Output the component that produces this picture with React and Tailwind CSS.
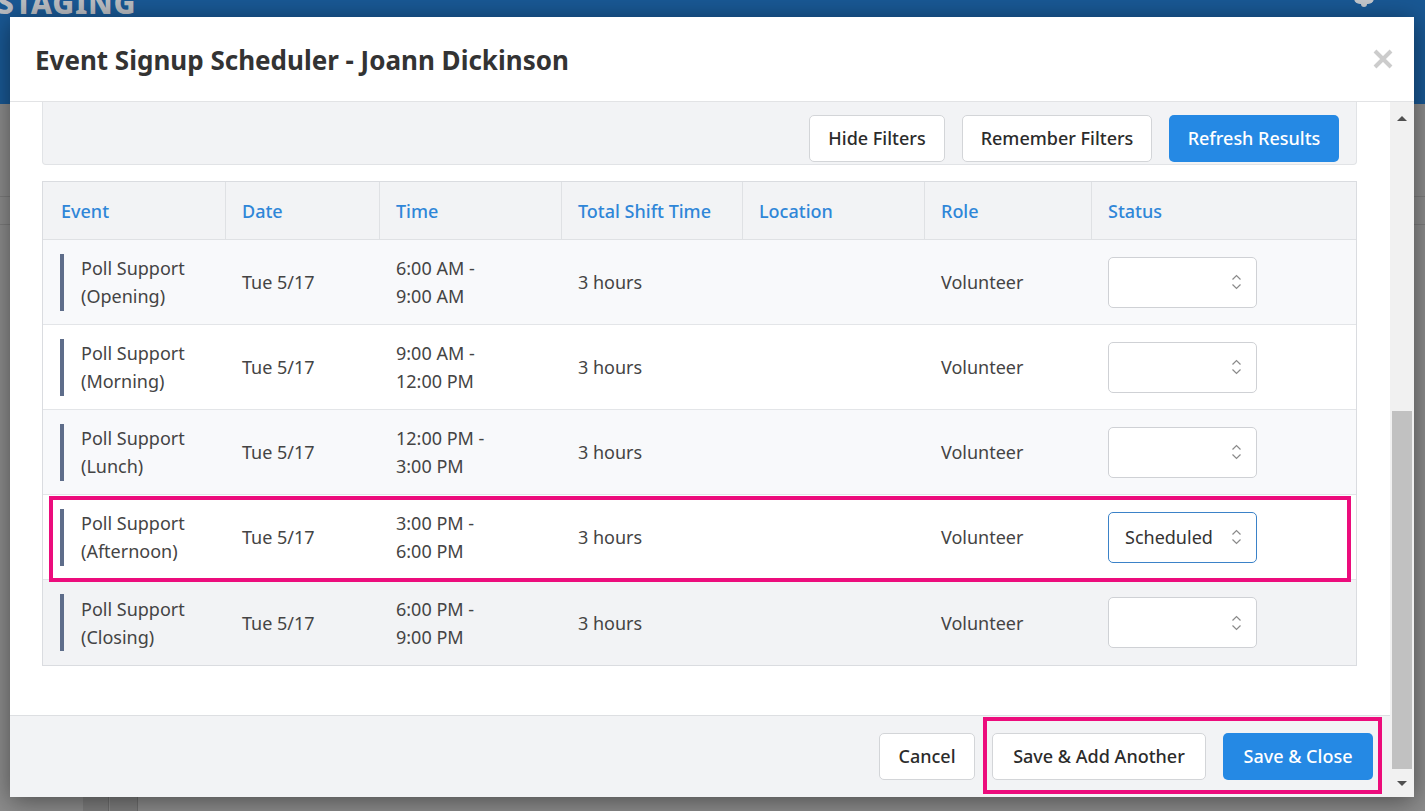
import React from "react";

const rows = [
  { a: "Poll Support", b: "(Opening)", t1: "6:00 AM -", t2: "9:00 AM", bg: "bg-[#f8f9fb]" },
  { a: "Poll Support", b: "(Morning)", t1: "9:00 AM -", t2: "12:00 PM", bg: "bg-white" },
  { a: "Poll Support", b: "(Lunch)", t1: "12:00 PM -", t2: "3:00 PM", bg: "bg-[#f8f9fb]" },
  { a: "Poll Support", b: "(Afternoon)", t1: "3:00 PM -", t2: "6:00 PM", bg: "bg-white", val: "Scheduled" },
  { a: "Poll Support", b: "(Closing)", t1: "6:00 PM -", t2: "9:00 PM", bg: "bg-[#f2f3f5]" },
];

const grid = "grid grid-cols-[183px_154px_182px_181px_182px_167px_1fr]";

function Chevrons() {
  return (
    <svg width="11" height="18" viewBox="0 0 11 18" fill="none" stroke="#8a8a8a" strokeWidth="1.2">
      <path d="M1.5 6.5 L5.5 2.5 L9.5 6.5" />
      <path d="M1.5 11.5 L5.5 15.5 L9.5 11.5" />
    </svg>
  );
}

function Select({ value }) {
  return (
    <div
      className={`w-[149px] h-[51px] rounded-[5px] bg-white border flex items-center justify-between pl-[16px] pr-[14px] ${
        value ? "border-[#3b82c8]" : "border-[#cfd1d5]"
      }`}
    >
      <span className="text-[18px] text-[#333]">{value || ""}</span>
      <Chevrons />
    </div>
  );
}

function Btn({ children, w, primary }) {
  return (
    <div
      className={`${w} h-[47px] rounded-[5px] flex items-center justify-center text-[18px] font-medium ${
        primary ? "bg-[#2589e4] text-white" : "bg-white border border-[#d3d5d8] text-[#2b2b2b]"
      }`}
    >
      {children}
    </div>
  );
}

export default function App() {
  return (
    <div
      className="relative w-[1425px] h-[811px] overflow-hidden bg-[#8c8c8c]"
      style={{ fontFamily: '"Noto Sans", "Open Sans", sans-serif' }}
    >
      {/* background page (dimmed) */}
      <div className="h-[104px] bg-[#195894] relative overflow-hidden">
        <div className="absolute left-[-3px] top-[-20px] text-[30px] font-extrabold tracking-wide text-[#b9bcc1]">
          STAGING
        </div>
        <div className="absolute left-[1354px] top-[-6px] w-[22px] h-[14px]">
          <div className="w-[20px] h-[10px] bg-[#c4c7cc] rounded-b-[6px]" />
          <div className="w-[6px] h-[3px] bg-[#c4c7cc] rounded-b-full ml-[7px]" />
        </div>
      </div>
      <div className="flex flex-col">
        <div className="h-[93px] border-b border-[#7c7c7c]" />
        <div className="h-[28px] border-b border-[#7c7c7c]" />
      </div>
      <div className="absolute left-[83px] top-[797px] w-[26px] h-[14px] bg-[#7e7e7e] border-r border-[#6e6e6e]" />
      <div className="absolute left-[110px] top-[797px] w-[28px] h-[14px] bg-[#7e7e7e] border-r border-[#6e6e6e]" />

      {/* modal */}
      <div className="absolute left-[10px] top-[17px] w-[1404px] h-[780px] bg-white flex flex-col shadow-[0_4px_24px_rgba(0,0,0,0.45)]">
        {/* header */}
        <div className="h-[85px] shrink-0 flex items-center justify-between pl-[25px] pr-[21px] border-b border-[#e2e3e5]">
          <div className="text-[26px] font-bold text-[#333] mt-[3px]">
            Event Signup Scheduler - Joann Dickinson
          </div>
          <svg width="20" height="20" viewBox="0 0 20 20" stroke="#cccccc" strokeWidth="4" strokeLinecap="butt">
            <path d="M2 2 L18 18 M18 2 L2 18" />
          </svg>
        </div>

        <div className="flex flex-1 min-h-0">
          {/* main column */}
          <div className="flex-1 flex flex-col min-w-0">
            <div className="flex-1 pl-[32px] pr-[33px]">
              {/* filters panel */}
              <div className="h-[63px] bg-[#f2f3f5] border border-t-0 border-[#e1e3e6] rounded-b-[4px] flex justify-end items-start gap-[17px] pt-[13px] pr-[17px]">
                <Btn w="w-[136px]">Hide Filters</Btn>
                <Btn w="w-[190px]">Remember Filters</Btn>
                <Btn w="w-[170px]" primary>Refresh Results</Btn>
              </div>

              {/* table */}
              <div className="mt-[16px] border border-[#dadce0]">
                <div className={`${grid} h-[58px] bg-[#f2f3f5] border-b border-[#dfe1e4] text-[18px] font-medium text-[#2f86d8]`}>
                  {["Event", "Date", "Time", "Total Shift Time", "Location", "Role", "Status"].map((h, i) => (
                    <div
                      key={h}
                      className={`flex items-center pt-[2px] ${i === 0 ? "pl-[18px]" : "pl-[16px]"} ${
                        i < 6 ? "border-r border-[#dfe1e4]" : ""
                      }`}
                    >
                      {h}
                    </div>
                  ))}
                </div>
                {rows.map((r, i) => (
                  <div
                    key={i}
                    className={`${grid} h-[85px] ${r.bg} ${i < rows.length - 1 ? "border-b border-[#e3e5e8]" : ""} text-[18px] text-[#444] leading-[28px]`}
                  >
                    <div className="flex items-center pl-[17px]">
                      <div className="w-[4px] h-[57px] bg-[#5e6d8a] mr-[17px]" />
                      <div>
                        <div>{r.a}</div>
                        <div>{r.b}</div>
                      </div>
                    </div>
                    <div className="flex items-center pl-[16px]">Tue 5/17</div>
                    <div className="flex items-center pl-[16px]">
                      <div>
                        <div>{r.t1}</div>
                        <div>{r.t2}</div>
                      </div>
                    </div>
                    <div className="flex items-center pl-[16px]">3 hours</div>
                    <div />
                    <div className="flex items-center pl-[16px]">Volunteer</div>
                    <div className="flex items-center pl-[16px]">
                      <Select value={r.val} />
                    </div>
                  </div>
                ))}
              </div>
            </div>

            {/* footer */}
            <div className="h-[82px] shrink-0 bg-[#f2f3f5] border-t border-[#dddfe2] flex justify-end items-center gap-[17px] pr-[17px]">
              <Btn w="w-[96px]">Cancel</Btn>
              <Btn w="w-[214px]">Save &amp; Add Another</Btn>
              <Btn w="w-[150px]" primary>Save &amp; Close</Btn>
            </div>
          </div>

          {/* scrollbar */}
          <div className="w-[24px] shrink-0 bg-[#f1f1f1] flex flex-col items-center">
            <div className="h-[30px] flex items-center justify-center pt-[2px]">
              <div className="w-0 h-0 border-l-[5px] border-r-[5px] border-b-[5px] border-l-transparent border-r-transparent border-b-[#505050]" />
            </div>
            <div className="flex-1 w-full flex flex-col justify-end px-[2px]">
              <div className="h-[358px] bg-[#c1c1c1]" />
            </div>
            <div className="h-[28px] flex items-center justify-center">
              <div className="w-0 h-0 border-l-[5px] border-r-[5px] border-t-[5px] border-l-transparent border-r-transparent border-t-[#505050]" />
            </div>
          </div>
        </div>

        {/* annotation boxes */}
        <div className="absolute left-[39px] top-[479px] w-[1302px] h-[86px] border-[4px] border-[#ec0c7c] pointer-events-none" />
        <div className="absolute left-[973px] top-[700px] w-[399px] h-[77px] border-[4px] border-[#ec0c7c] pointer-events-none" />
      </div>
    </div>
  );
}
